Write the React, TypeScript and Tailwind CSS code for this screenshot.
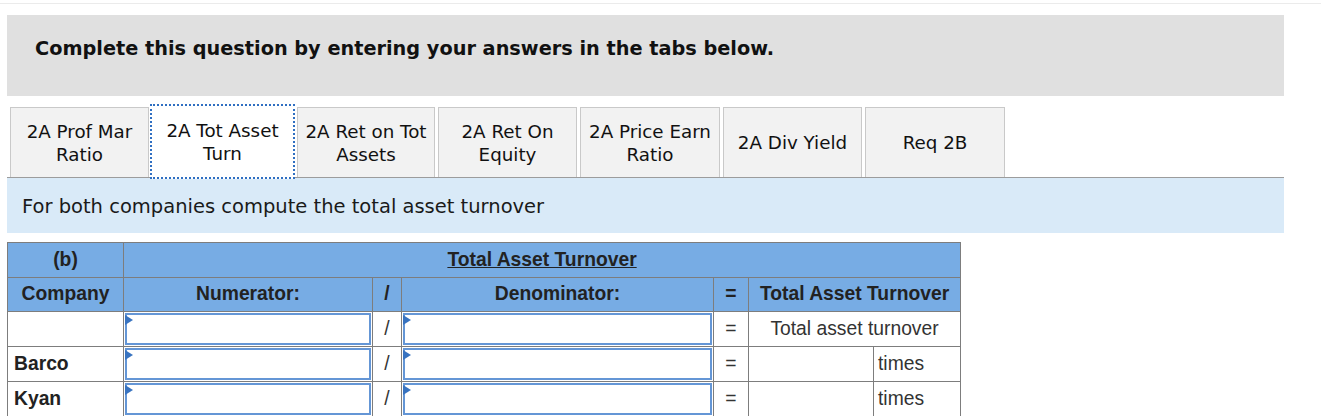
import React from "react";

function Inp() {
  return (
    <div className="relative h-[32px] border-2 border-[#6496d6] bg-white">
      <div className="absolute left-[-2px] top-0 w-0 h-0 border-y-[5px] border-y-transparent border-l-[8px] border-l-[#3873c0]" />
    </div>
  );
}

export default function App() {
  const tabs: { label: React.ReactNode; w: string; ml: string; sel?: boolean }[] = [
    { label: <>2A Prof Mar<br />Ratio</>, w: "w-[139px]", ml: "ml-0" },
    { label: <>2A Tot Asset<br />Turn</>, w: "w-[145px]", ml: "ml-[1px]", sel: true },
    { label: <>2A Ret on Tot<br />Assets</>, w: "w-[138px]", ml: "ml-[2px]" },
    { label: <>2A Ret On<br />Equity</>, w: "w-[139px]", ml: "ml-[3px]" },
    { label: <>2A Price Earn<br />Ratio</>, w: "w-[140px]", ml: "ml-[3px]" },
    { label: <>2A Div Yield</>, w: "w-[139px]", ml: "ml-[3px]" },
    { label: <>Req 2B</>, w: "w-[140px]", ml: "ml-[3px]" },
  ];
  const cell = "border border-[#7d7d7d]";
  return (
    <div className="w-[1321px] h-[416px] overflow-hidden bg-white font-['DejaVu_Sans',sans-serif] text-[#111]">
      <div className="h-[3px]" />
      <div className="h-[1px] bg-[#ebebeb]" />
      <div className="ml-[7px] w-[1277px] mt-[11px]">
        <div className="h-[81px] bg-[#e0e0e0] pl-[28px] pt-[22px] font-bold text-[19.3px] leading-[23px]">
          Complete this question by entering your answers in the tabs below.
        </div>
        <div className="mt-[8px] flex items-end border-b border-[#9c9c9c] pl-[3px]">
          {tabs.map((t, i) =>
            t.sel ? (
              <div
                key={i}
                className={`${t.w} ${t.ml} relative z-10 -mb-[2px] h-[75px] bg-white border-2 border-dotted border-[#2f6fc2] flex items-center justify-center text-center text-[18.3px] leading-[23px]`}
              >
                {t.label}
              </div>
            ) : (
              <div
                key={i}
                className={`${t.w} ${t.ml} h-[70px] bg-[#f2f2f2] border-t border-x border-[#c9c9c9] flex items-center justify-center text-center text-[18.3px] leading-[23px]`}
              >
                {t.label}
              </div>
            )
          )}
        </div>
        <div className="h-[55px] bg-[#d9eaf8] pl-[15px] pt-[3px] flex items-center text-[19.5px] text-[#1a1a1a]">
          For both companies compute the total asset turnover
        </div>
        <div className="mt-[9px] font-['Liberation_Sans',Arial,sans-serif] text-[19.3px] text-[#222]">
          <table className="table-fixed border-collapse w-[953px]">
            <colgroup>
              <col className="w-[116px]" />
              <col className="w-[249px]" />
              <col className="w-[29px]" />
              <col className="w-[312px]" />
              <col className="w-[35px]" />
              <col className="w-[125px]" />
              <col className="w-[87px]" />
            </colgroup>
            <tbody>
              <tr className="h-[35px] bg-[#77ace4] font-bold">
                <td className={`${cell} text-center p-0`}>(b)</td>
                <td className={`${cell} text-center p-0`} colSpan={6}>
                  <span className="underline">Total Asset Turnover</span>
                </td>
              </tr>
              <tr className="h-[34px] bg-[#77ace4] font-bold">
                <td className={`${cell} text-center p-0`}>Company</td>
                <td className={`${cell} text-center p-0`}>Numerator:</td>
                <td className={`${cell} text-center p-0`}>/</td>
                <td className={`${cell} text-center p-0`}>Denominator:</td>
                <td className={`${cell} text-center p-0`}>=</td>
                <td className={`${cell} text-center p-0`} colSpan={2}>Total Asset Turnover</td>
              </tr>
              <tr className="h-[35px]">
                <td className={`${cell} p-0`}></td>
                <td className={`${cell} p-[1px]`}><Inp /></td>
                <td className={`${cell} text-center p-0 text-[#333]`}>/</td>
                <td className={`${cell} p-[1px]`}><Inp /></td>
                <td className={`${cell} text-center p-0 text-[#333]`}>=</td>
                <td className={`${cell} text-center p-0 text-[#333]`} colSpan={2}>Total asset turnover</td>
              </tr>
              {["Barco", "Kyan"].map((n) => (
                <tr key={n} className="h-[34px]">
                  <td className={`${cell} px-[6px] py-0 font-bold`}>{n}</td>
                  <td className={`${cell} p-[1px]`}><Inp /></td>
                  <td className={`${cell} text-center p-0 text-[#333]`}>/</td>
                  <td className={`${cell} p-[1px]`}><Inp /></td>
                  <td className={`${cell} text-center p-0 text-[#333]`}>=</td>
                  <td className={`${cell} p-0`}></td>
                  <td className={`${cell} px-[4px] py-0 text-[#333]`}>times</td>
                </tr>
              ))}
            </tbody>
          </table>
        </div>
      </div>
    </div>
  );
}
